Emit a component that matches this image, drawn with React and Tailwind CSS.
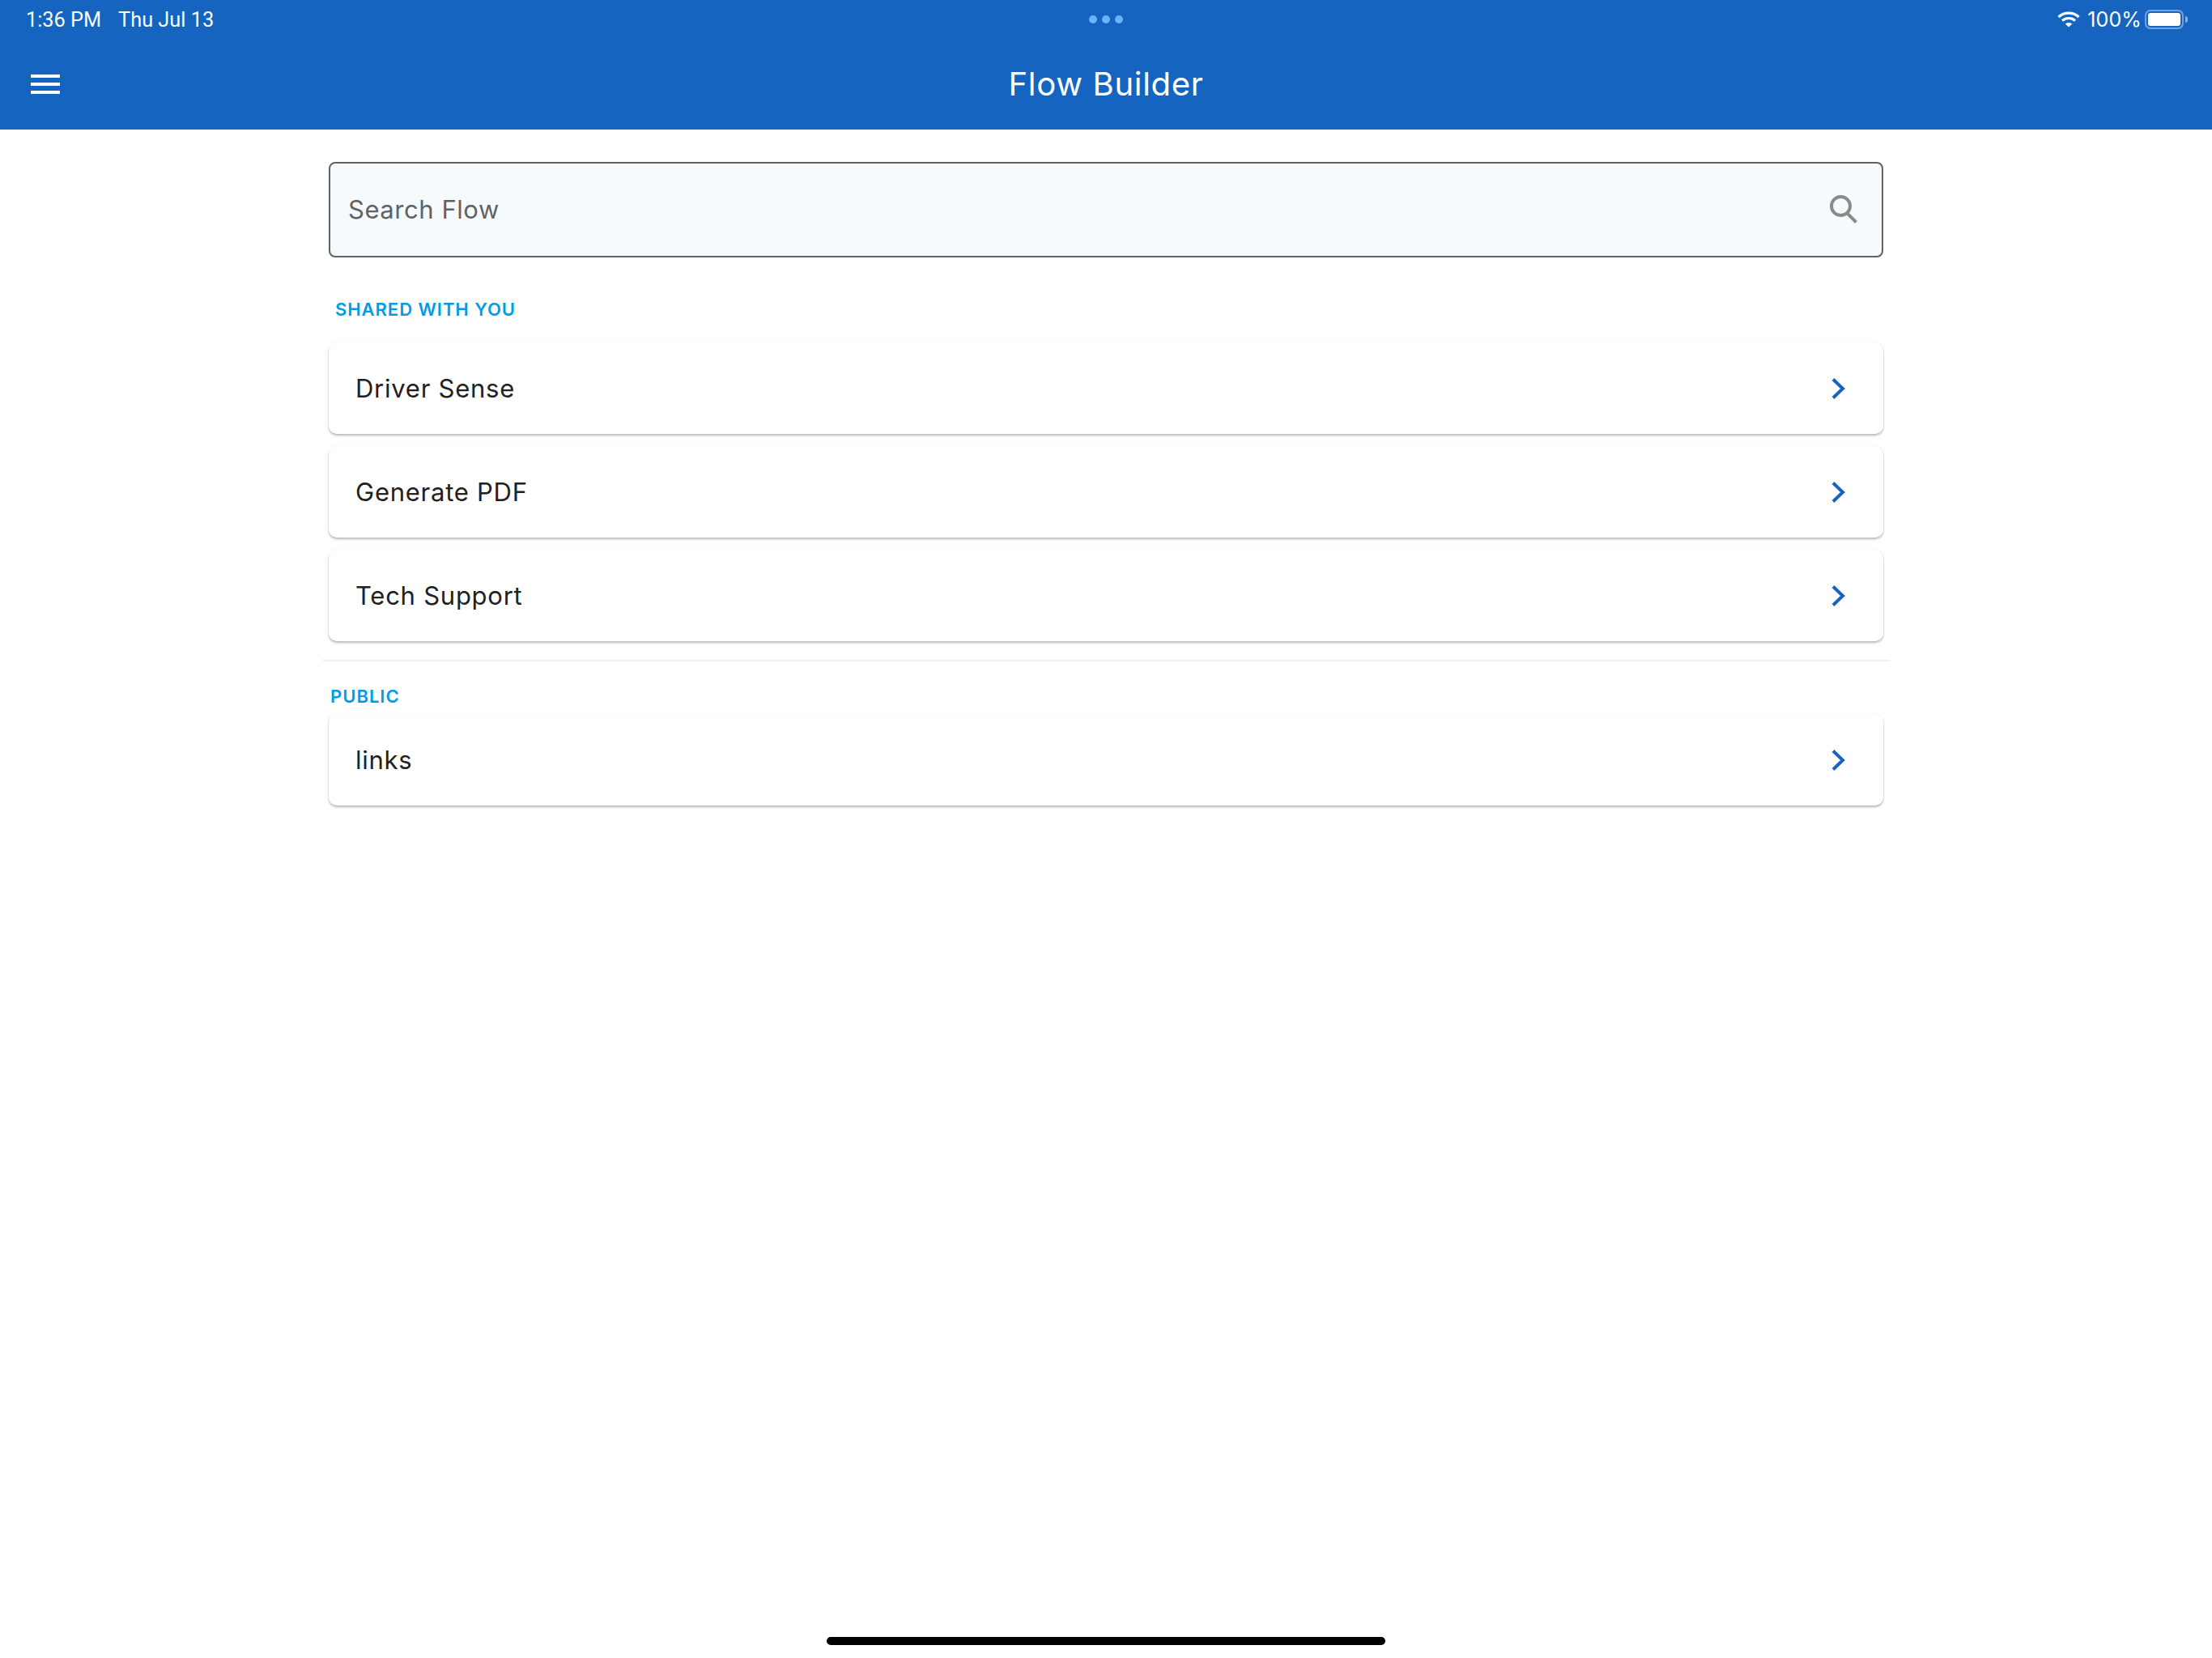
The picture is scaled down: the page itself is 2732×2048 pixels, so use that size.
const sharedFlows = ["Driver Sense", "Generate PDF", "Tech Support"];
const publicFlows = ["links"];

function FlowCard({ name }) {
  return (
    <div className="flex h-[113px] items-center justify-between rounded-[10px] bg-white pl-[33px] pr-[45px] shadow-[0_2px_3px_rgba(0,0,0,0.28),0_0_2px_rgba(0,0,0,0.06)]">
      <span className="text-[31px] font-[375] leading-[40px] tracking-[0.75px] text-[#212121]">{name}</span>
      <svg width="20" height="26" viewBox="0 0 20 26" fill="none" stroke="#1565C0" strokeWidth="4">
        <path d="M3 1.5 L15 13 L3 24.5" />
      </svg>
    </div>
  );
}

export default function App() {
  return (
    <div className="flex h-[2048px] w-[2732px] flex-col bg-white font-['Inter',sans-serif]">
      <header className="h-[160px] bg-[#1565C0] text-white">
        {/* status bar */}
        <div className="relative flex h-[48px] items-center justify-between pl-[32px] pr-[30px] font-['Roboto',sans-serif]">
          <div className="flex gap-[21px] pt-[1px] text-[25.3px] leading-[48px]">
            <span>1:36 PM</span>
            <span>Thu Jul 13</span>
          </div>
          <div className="absolute left-[1345px] top-[19px] flex gap-[6px]">
            <span className="h-[10px] w-[10px] rounded-full bg-[#6AB4FF]" />
            <span className="h-[10px] w-[10px] rounded-full bg-[#6AB4FF]" />
            <span className="h-[10px] w-[10px] rounded-full bg-[#6AB4FF]" />
          </div>
          <div className="flex items-center">
            <svg width="28" height="22" viewBox="0 0 28 22" fill="none" stroke="white" strokeWidth="3.2">
              <path d="M1.5 8 C8.5 1.5 19.5 1.5 26.5 8" />
              <path d="M6 12.5 C10.5 8.5 17.5 8.5 22 12.5" />
              <path d="M14 20.5 L9.8 16.4 C12 14.4 16 14.4 18.2 16.4 Z" fill="white" stroke="none" />
            </svg>
            <span className="ml-[9px] font-['Inter',sans-serif] text-[25px] font-[375] leading-[48px] tracking-[0.1px]">100%</span>
            <div className="ml-[4px] flex items-center">
              <div className="h-[24px] w-[48px] rounded-[7px] border-[2px] border-white/40 p-[2px]">
                <div className="h-full w-full rounded-[3px] bg-white" />
              </div>
              <div className="ml-[2px] h-[8px] w-[3px] rounded-r-full bg-white/50" />
            </div>
          </div>
        </div>
        {/* title bar */}
        <div className="relative flex h-[112px] items-center justify-center">
          <svg className="absolute left-[38px] top-[44px]" width="36" height="24" viewBox="0 0 36 24" fill="white">
            <rect x="0" y="0" width="36" height="4" />
            <rect x="0" y="10" width="36" height="4" />
            <rect x="0" y="20" width="36" height="4" />
          </svg>
          <h1 className="text-[40px] font-[375] leading-[48px] tracking-[0.7px]">Flow Builder</h1>
        </div>
      </header>

      <main className="mx-auto flex w-[1936px] flex-1 flex-col pt-[40px]">
        <div className="mx-[8px] flex h-[118px] items-center justify-between rounded-[8px] border-[2px] border-[#5F6368] bg-[#F7FAFD] pl-[22px] pr-[30px]">
          <span className="text-[31px] font-[375] leading-[40px] tracking-[0.55px] text-[#5F6368]">Search Flow</span>
          <svg width="36" height="36" viewBox="0 0 36 36" fill="none" stroke="#8A8A8A" strokeWidth="4">
            <circle cx="15.5" cy="13.5" r="11.5" />
            <path d="M23 22 L34.5 33.5" />
          </svg>
        </div>

        <div className="ml-[16px] mt-[52px] h-[24px] text-[22px] font-semibold leading-[24px] tracking-[0.95px] text-[#039BE5]">SHARED WITH YOU</div>
        <div className="mx-[8px] mt-[29px] flex flex-col gap-[15px]">
          {sharedFlows.map((flow) => (
            <FlowCard key={flow} name={flow} />
          ))}
        </div>

        <div className="mt-[23px] h-[2px] bg-[#F0F0F0]" />

        <div className="ml-[10px] mt-[31px] h-[24px] text-[22px] font-semibold leading-[24px] tracking-[1px] text-[#039BE5]">PUBLIC</div>
        <div className="mx-[8px] mt-[10px] flex flex-col gap-[15px]">
          {publicFlows.map((flow) => (
            <FlowCard key={flow} name={flow} />
          ))}
        </div>
      </main>

      <div className="flex h-[26px] justify-center">
        <div className="h-[10px] w-[690px] rounded-full bg-black" />
      </div>
    </div>
  );
}
